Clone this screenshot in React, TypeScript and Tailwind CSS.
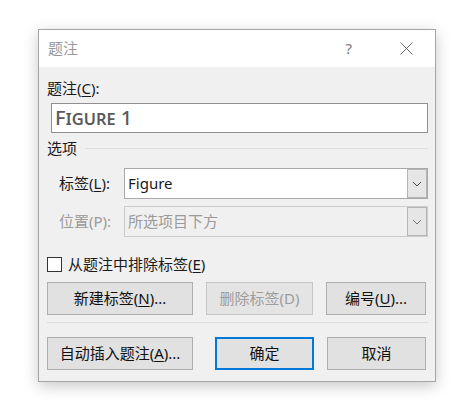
const font = { fontFamily: '"Noto Sans", "Noto Sans CJK SC", sans-serif' };

function Chevron({ color = '#555' }: { color?: string }) {
  return (
    <svg width="10" height="6" viewBox="0 0 10 6" fill="none">
      <path d="M1 1 L5 5 L9 1" stroke={color} strokeWidth="1" />
    </svg>
  );
}

function Combo({ value, disabled }: { value: string; disabled?: boolean }) {
  return (
    <div
      className={`flex h-[31px] flex-1 items-stretch border ${
        disabled ? 'border-[#cccccc] bg-[#f0f0f0] text-[#9a9a9a]' : 'border-[#a9a9a9] bg-white text-[#1a1a1a]'
      }`}
    >
      <div className="flex flex-1 items-center pl-[3px] text-[15px]">{value}</div>
      <div className="flex w-[20px] items-center justify-center border border-[#b5b5b5] bg-[#e6e6e6]">
        <Chevron color={disabled ? '#777' : '#444'} />
      </div>
    </div>
  );
}

function Btn({
  children,
  w,
  disabled,
  primary,
}: {
  children: React.ReactNode;
  w: string;
  disabled?: boolean;
  primary?: boolean;
}) {
  return (
    <div
      className={`flex h-[33px] items-center justify-center text-[15px] ${w} ${
        primary
          ? 'border-2 border-[#0078d7] bg-[#e1e1e1] text-[#111]'
          : disabled
          ? 'border border-[#c6c6c6] bg-[#e4e4e4] text-[#9d9d9d]'
          : 'border border-[#adadad] bg-[#e1e1e1] text-[#111]'
      }`}
    >
      {children}
    </div>
  );
}

export default function App() {
  return (
    <div className="h-[405px] w-[476px] bg-white pl-[38px] pt-[29px]" style={font}>
      <div className="flex h-[353px] w-[398px] flex-col border border-[#a6a6a6] bg-[#f0f0f0] shadow-[0_4px_14px_rgba(0,0,0,0.22)]">
        {/* title bar */}
        <div className="flex h-[37px] shrink-0 items-center bg-white pl-[9px] text-[15px] text-[#999]">
          <span className="flex-1">题注</span>
          <span className="mr-[48px] text-[15px] text-[#777]">?</span>
          <svg className="mr-[22px]" width="13" height="13" viewBox="0 0 13 13">
            <path d="M0.5 0.5 L12.5 12.5 M12.5 0.5 L0.5 12.5" stroke="#666" strokeWidth="1" />
          </svg>
        </div>

        <div className="flex flex-1 flex-col pl-[8px] pr-[7px] text-[15px] text-[#1a1a1a]">
          <div className="mt-[11px] leading-[20px]">
            题注(<span className="underline underline-offset-2">C</span>):
          </div>
          <div className="ml-[4px] mt-[5px] flex h-[30px] items-center border border-[#8f8f8f] bg-white pl-[3px]">
            <span className="text-[20px] font-medium leading-none text-[#5a5a5a] [font-variant:small-caps]">
              Figure 1
            </span>
          </div>

          <div className="mt-[5px] flex items-center gap-[8px] leading-[20px]">
            <span>选项</span>
            <div className="h-px flex-1 bg-[#dcdcdc]" />
          </div>

          <div className="mt-[10px] flex items-center">
            <span className="w-[77px] pl-[12px]">
              标签(<span className="underline underline-offset-2">L</span>):
            </span>
            <Combo value="Figure" />
          </div>
          <div className="mt-[7px] flex items-center">
            <span className="w-[77px] pl-[12px] text-[#9a9a9a]">位置(P):</span>
            <Combo value="所选项目下方" disabled />
          </div>

          <div className="mt-[19px] flex items-center gap-[6px] leading-[16px]">
            <div className="h-[15px] w-[15px] border border-[#333] bg-white" />
            <span>
              从题注中排除标签(<span className="underline underline-offset-2">E</span>)
            </span>
          </div>

          <div className="mt-[10px] flex items-center">
            <Btn w="w-[146px]">
              新建标签(<span className="underline underline-offset-2">N</span>)...
            </Btn>
            <div className="ml-[13px]">
              <Btn w="w-[107px]" disabled>
                删除标签(D)
              </Btn>
            </div>
            <div className="ml-[13px]">
              <Btn w="w-[100px]">
                编号(<span className="underline underline-offset-2">U</span>)...
              </Btn>
            </div>
          </div>

          <div className="mt-[7px] h-px bg-[#dcdcdc]" />

          <div className="mt-[14px] flex items-center">
            <Btn w="w-[146px]">
              自动插入题注(<span className="underline underline-offset-2">A</span>)...
            </Btn>
            <div className="ml-[22px]">
              <Btn w="w-[99px]" primary>
                确定
              </Btn>
            </div>
            <div className="ml-[13px]">
              <Btn w="w-[99px]">取消</Btn>
            </div>
          </div>
        </div>
      </div>
    </div>
  );
}
